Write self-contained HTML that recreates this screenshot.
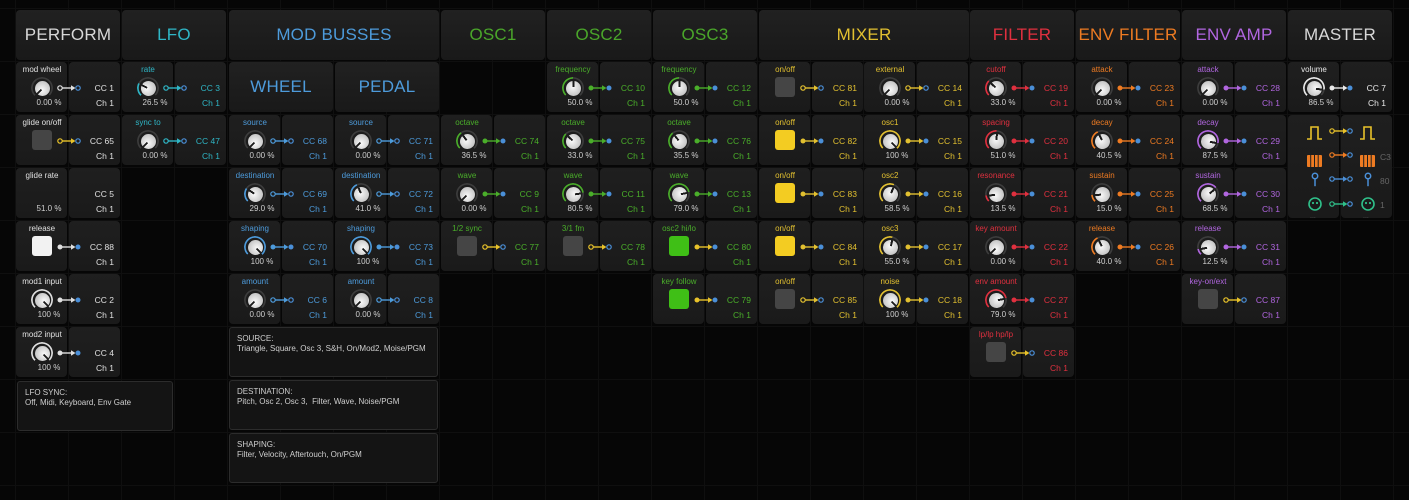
<!DOCTYPE html>
<html><head><meta charset="utf-8"><style>
*{box-sizing:border-box;margin:0;padding:0}
body{width:1409px;height:500px;overflow:hidden;background:#060606;font-family:"Liberation Sans",sans-serif;position:relative;
background-image:linear-gradient(90deg,#0f0f0f 1px,transparent 1px),linear-gradient(#0f0f0f 1px,transparent 1px);background-size:53px 53px;background-position:15px 8px}
.h{position:absolute;top:10px;height:50px;width:104px;border-radius:4px;background:linear-gradient(#212121,#191919);font-size:17px;display:flex;align-items:center;justify-content:center;letter-spacing:0.2px}
.c{position:absolute;width:104px;height:50px;color:var(--c)}
.L,.R{position:absolute;top:0;height:50px;width:51px;border-radius:4px;background:linear-gradient(#1f1f1f,#1a1a1a)}
.L{left:0}.R{left:53px}
.L b{position:absolute;left:-4px;width:60px;top:3px;text-align:center;font-weight:normal;font-size:8px;white-space:nowrap}
.L s{position:absolute;left:8px;width:50px;top:36px;text-align:center;text-decoration:none;font-size:8px;color:#cfcfcf}
.R u,.R em{position:absolute;right:6px;font-size:8.5px;text-decoration:none;font-style:normal}
.R u{top:21px}.R em{top:36px}
.k{position:absolute;left:15px;top:15px;width:22px;height:22px}
.k:before{content:"";position:absolute;inset:0;border-radius:50%;background:conic-gradient(from 225deg,var(--c) calc(var(--p)*270deg),#3c3c3c 0 270deg,transparent 0);-webkit-mask:radial-gradient(circle,transparent 9px,#000 9.5px);mask:radial-gradient(circle,transparent 9px,#000 9.5px)}
.k:after{content:"";position:absolute;left:3.5px;top:3.5px;width:15px;height:15px;border-radius:50%;background:linear-gradient(90deg,transparent 6.5px,#1a1a1a 6.5px 8.5px,transparent 8.5px) top/100% 6px no-repeat,radial-gradient(circle at 45% 40%,#fafafa,#c8c8c8 70%,#999);transform:rotate(calc(-135deg + var(--p)*270deg))}
.t{position:absolute;left:16px;top:15px;width:20px;height:20px;border-radius:3px;background:#454545}
.a{position:absolute;left:41px;top:22px;width:24px;height:8px;z-index:2;overflow:visible}
.x{position:absolute;border:1px solid #2c2c2c;background:#141414;border-radius:3px;color:#cfcfcf;font-size:8px;line-height:10px;padding:6px 7px}
.m{position:absolute;top:115px;height:103px;width:51px;border-radius:4px;background:linear-gradient(#1f1f1f,#1a1a1a)}
</style></head><body>
<svg width="0" height="0" style="position:absolute">
<symbol id="ao" viewBox="0 0 24 8"><circle cx="3" cy="4" r="2.2" fill="none" stroke="currentColor" stroke-width="1.2"/><path d="M5.2 4H15" stroke="currentColor" stroke-width="1.4"/><path d="M14 1.3L18.5 4L14 6.7Z" fill="currentColor"/><circle cx="21" cy="4" r="2.2" fill="none" stroke="#4a8fd8" stroke-width="1.2"/></symbol>
<symbol id="af" viewBox="0 0 24 8"><circle cx="3" cy="4" r="2.5" fill="currentColor"/><path d="M5 4H15" stroke="currentColor" stroke-width="1.4"/><path d="M14 1.3L18.5 4L14 6.7Z" fill="currentColor"/><circle cx="21" cy="4" r="2.5" fill="#4a8fd8"/></symbol>
</svg>

<div class="h" style="left:16px;color:#d8d8d8">PERFORM</div>
<div class="h" style="left:122px;color:#2fb6c6">LFO</div>
<div class="h" style="left:229px;width:210px;color:#4d9bdb">MOD BUSSES</div>
<div class="h" style="left:441px;color:#4aa62a">OSC1</div>
<div class="h" style="left:547px;color:#4aa62a">OSC2</div>
<div class="h" style="left:653px;color:#4aa62a">OSC3</div>
<div class="h" style="left:759px;width:210px;color:#e2c030">MIXER</div>
<div class="h" style="left:970px;color:#e0303f">FILTER</div>
<div class="h" style="left:1076px;color:#ee7b22">ENV FILTER</div>
<div class="h" style="left:1182px;color:#b166e0">ENV AMP</div>
<div class="h" style="left:1288px;color:#d8d8d8">MASTER</div>
<div class="h" style="left:229px;top:62px;width:104px;color:#4d9bdb">WHEEL</div>
<div class="h" style="left:335px;top:62px;width:104px;color:#4d9bdb">PEDAL</div>

<div class="c" style="left:16px;top:62px;--c:#e0e0e0"><div class="L"><b>mod wheel</b><i class="k" style="--p:0"></i><s>0.00 %</s></div><div class="R"><u>CC 1</u><em>Ch 1</em></div><svg class="a"><use href="#ao"/></svg></div>
<div class="c" style="left:16px;top:115px;--c:#e0e0e0"><div class="L"><b>glide on/off</b><i class="t"></i></div><div class="R"><u>CC 65</u><em>Ch 1</em></div><svg class="a" style="color:#e8c22a"><use href="#ao"/></svg></div>
<div class="c" style="left:16px;top:168px;--c:#e0e0e0"><div class="L"><b>glide rate</b><s>51.0 %</s></div><div class="R"><u>CC 5</u><em>Ch 1</em></div></div>
<div class="c" style="left:16px;top:221px;--c:#e0e0e0"><div class="L"><b>release</b><i class="t" style="background:#f2f2f2"></i></div><div class="R"><u>CC 88</u><em>Ch 1</em></div><svg class="a"><use href="#af"/></svg></div>
<div class="c" style="left:16px;top:274px;--c:#e0e0e0"><div class="L"><b>mod1 input</b><i class="k" style="--p:1"></i><s>100 %</s></div><div class="R"><u>CC 2</u><em>Ch 1</em></div><svg class="a"><use href="#af"/></svg></div>
<div class="c" style="left:16px;top:327px;--c:#e0e0e0"><div class="L"><b>mod2 input</b><i class="k" style="--p:1"></i><s>100 %</s></div><div class="R"><u>CC 4</u><em>Ch 1</em></div><svg class="a"><use href="#af"/></svg></div>
<div class="x" style="left:17px;top:381px;width:156px;height:50px">LFO SYNC:<br>Off, Midi, Keyboard, Env Gate</div>

<div class="c" style="left:122px;top:62px;--c:#2fb6c6"><div class="L"><b>rate</b><i class="k" style="--p:0.265"></i><s>26.5 %</s></div><div class="R"><u>CC 3</u><em>Ch 1</em></div><svg class="a"><use href="#ao"/></svg></div>
<div class="c" style="left:122px;top:115px;--c:#2fb6c6"><div class="L"><b>sync to</b><i class="k" style="--p:0"></i><s>0.00 %</s></div><div class="R"><u>CC 47</u><em>Ch 1</em></div><svg class="a"><use href="#ao"/></svg></div>

<div class="c" style="left:229px;top:115px;--c:#4d9bdb"><div class="L"><b>source</b><i class="k" style="--p:0"></i><s>0.00 %</s></div><div class="R"><u>CC 68</u><em>Ch 1</em></div><svg class="a"><use href="#ao"/></svg></div>
<div class="c" style="left:229px;top:168px;--c:#4d9bdb"><div class="L"><b>destination</b><i class="k" style="--p:0.29"></i><s>29.0 %</s></div><div class="R"><u>CC 69</u><em>Ch 1</em></div><svg class="a"><use href="#ao"/></svg></div>
<div class="c" style="left:229px;top:221px;--c:#4d9bdb"><div class="L"><b>shaping</b><i class="k" style="--p:1"></i><s>100 %</s></div><div class="R"><u>CC 70</u><em>Ch 1</em></div><svg class="a"><use href="#af"/></svg></div>
<div class="c" style="left:229px;top:274px;--c:#4d9bdb"><div class="L"><b>amount</b><i class="k" style="--p:0"></i><s>0.00 %</s></div><div class="R"><u>CC 6</u><em>Ch 1</em></div><svg class="a"><use href="#ao"/></svg></div>
<div class="c" style="left:335px;top:115px;--c:#4d9bdb"><div class="L"><b>source</b><i class="k" style="--p:0"></i><s>0.00 %</s></div><div class="R"><u>CC 71</u><em>Ch 1</em></div><svg class="a"><use href="#ao"/></svg></div>
<div class="c" style="left:335px;top:168px;--c:#4d9bdb"><div class="L"><b>destination</b><i class="k" style="--p:0.41"></i><s>41.0 %</s></div><div class="R"><u>CC 72</u><em>Ch 1</em></div><svg class="a"><use href="#ao"/></svg></div>
<div class="c" style="left:335px;top:221px;--c:#4d9bdb"><div class="L"><b>shaping</b><i class="k" style="--p:1"></i><s>100 %</s></div><div class="R"><u>CC 73</u><em>Ch 1</em></div><svg class="a"><use href="#af"/></svg></div>
<div class="c" style="left:335px;top:274px;--c:#4d9bdb"><div class="L"><b>amount</b><i class="k" style="--p:0"></i><s>0.00 %</s></div><div class="R"><u>CC 8</u><em>Ch 1</em></div><svg class="a"><use href="#ao"/></svg></div>
<div class="x" style="left:229px;top:327px;width:209px;height:50px">SOURCE:<br>Triangle, Square, Osc 3, S&amp;H, On/Mod2, Moise/PGM</div>
<div class="x" style="left:229px;top:380px;width:209px;height:50px">DESTINATION:<br>Pitch, Osc 2, Osc 3,&nbsp; Filter, Wave, Noise/PGM</div>
<div class="x" style="left:229px;top:433px;width:209px;height:50px">SHAPING:<br>Filter, Velocity, Aftertouch, On/PGM</div>

<div class="c" style="left:441px;top:115px;--c:#4aae2a"><div class="L"><b>octave</b><i class="k" style="--p:0.365"></i><s>36.5 %</s></div><div class="R"><u>CC 74</u><em>Ch 1</em></div><svg class="a"><use href="#af"/></svg></div>
<div class="c" style="left:441px;top:168px;--c:#4aae2a"><div class="L"><b>wave</b><i class="k" style="--p:0"></i><s>0.00 %</s></div><div class="R"><u>CC 9</u><em>Ch 1</em></div><svg class="a"><use href="#af"/></svg></div>
<div class="c" style="left:441px;top:221px;--c:#4aae2a"><div class="L"><b>1/2 sync</b><i class="t"></i></div><div class="R"><u>CC 77</u><em>Ch 1</em></div><svg class="a" style="color:#e8c22a"><use href="#ao"/></svg></div>
<div class="c" style="left:547px;top:62px;--c:#4aae2a"><div class="L"><b>frequency</b><i class="k" style="--p:0.5"></i><s>50.0 %</s></div><div class="R"><u>CC 10</u><em>Ch 1</em></div><svg class="a"><use href="#af"/></svg></div>
<div class="c" style="left:547px;top:115px;--c:#4aae2a"><div class="L"><b>octave</b><i class="k" style="--p:0.33"></i><s>33.0 %</s></div><div class="R"><u>CC 75</u><em>Ch 1</em></div><svg class="a"><use href="#af"/></svg></div>
<div class="c" style="left:547px;top:168px;--c:#4aae2a"><div class="L"><b>wave</b><i class="k" style="--p:0.805"></i><s>80.5 %</s></div><div class="R"><u>CC 11</u><em>Ch 1</em></div><svg class="a"><use href="#af"/></svg></div>
<div class="c" style="left:547px;top:221px;--c:#4aae2a"><div class="L"><b>3/1 fm</b><i class="t"></i></div><div class="R"><u>CC 78</u><em>Ch 1</em></div><svg class="a" style="color:#e8c22a"><use href="#ao"/></svg></div>
<div class="c" style="left:653px;top:62px;--c:#4aae2a"><div class="L"><b>frequency</b><i class="k" style="--p:0.5"></i><s>50.0 %</s></div><div class="R"><u>CC 12</u><em>Ch 1</em></div><svg class="a"><use href="#af"/></svg></div>
<div class="c" style="left:653px;top:115px;--c:#4aae2a"><div class="L"><b>octave</b><i class="k" style="--p:0.355"></i><s>35.5 %</s></div><div class="R"><u>CC 76</u><em>Ch 1</em></div><svg class="a"><use href="#af"/></svg></div>
<div class="c" style="left:653px;top:168px;--c:#4aae2a"><div class="L"><b>wave</b><i class="k" style="--p:0.79"></i><s>79.0 %</s></div><div class="R"><u>CC 13</u><em>Ch 1</em></div><svg class="a"><use href="#af"/></svg></div>
<div class="c" style="left:653px;top:221px;--c:#4aae2a"><div class="L"><b>osc2 hi/lo</b><i class="t" style="background:#3fbf16"></i></div><div class="R"><u>CC 80</u><em>Ch 1</em></div><svg class="a" style="color:#e8c22a"><use href="#af"/></svg></div>
<div class="c" style="left:653px;top:274px;--c:#4aae2a"><div class="L"><b>key follow</b><i class="t" style="background:#3fbf16"></i></div><div class="R"><u>CC 79</u><em>Ch 1</em></div><svg class="a" style="color:#e8c22a"><use href="#af"/></svg></div>

<div class="c" style="left:759px;top:62px;--c:#e2c030"><div class="L"><b>on/off</b><i class="t"></i></div><div class="R"><u>CC 81</u><em>Ch 1</em></div><svg class="a"><use href="#ao"/></svg></div>
<div class="c" style="left:759px;top:115px;--c:#e2c030"><div class="L"><b>on/off</b><i class="t" style="background:#f3cc22"></i></div><div class="R"><u>CC 82</u><em>Ch 1</em></div><svg class="a"><use href="#af"/></svg></div>
<div class="c" style="left:759px;top:168px;--c:#e2c030"><div class="L"><b>on/off</b><i class="t" style="background:#f3cc22"></i></div><div class="R"><u>CC 83</u><em>Ch 1</em></div><svg class="a"><use href="#af"/></svg></div>
<div class="c" style="left:759px;top:221px;--c:#e2c030"><div class="L"><b>on/off</b><i class="t" style="background:#f3cc22"></i></div><div class="R"><u>CC 84</u><em>Ch 1</em></div><svg class="a"><use href="#af"/></svg></div>
<div class="c" style="left:759px;top:274px;--c:#e2c030"><div class="L"><b>on/off</b><i class="t"></i></div><div class="R"><u>CC 85</u><em>Ch 1</em></div><svg class="a"><use href="#ao"/></svg></div>
<div class="c" style="left:864px;top:62px;--c:#e2c030"><div class="L"><b>external</b><i class="k" style="--p:0"></i><s>0.00 %</s></div><div class="R"><u>CC 14</u><em>Ch 1</em></div><svg class="a"><use href="#ao"/></svg></div>
<div class="c" style="left:864px;top:115px;--c:#e2c030"><div class="L"><b>osc1</b><i class="k" style="--p:1"></i><s>100 %</s></div><div class="R"><u>CC 15</u><em>Ch 1</em></div><svg class="a"><use href="#af"/></svg></div>
<div class="c" style="left:864px;top:168px;--c:#e2c030"><div class="L"><b>osc2</b><i class="k" style="--p:0.585"></i><s>58.5 %</s></div><div class="R"><u>CC 16</u><em>Ch 1</em></div><svg class="a"><use href="#af"/></svg></div>
<div class="c" style="left:864px;top:221px;--c:#e2c030"><div class="L"><b>osc3</b><i class="k" style="--p:0.55"></i><s>55.0 %</s></div><div class="R"><u>CC 17</u><em>Ch 1</em></div><svg class="a"><use href="#af"/></svg></div>
<div class="c" style="left:864px;top:274px;--c:#e2c030"><div class="L"><b>noise</b><i class="k" style="--p:1"></i><s>100 %</s></div><div class="R"><u>CC 18</u><em>Ch 1</em></div><svg class="a"><use href="#af"/></svg></div>

<div class="c" style="left:970px;top:62px;--c:#e0303f"><div class="L"><b>cutoff</b><i class="k" style="--p:0.33"></i><s>33.0 %</s></div><div class="R"><u>CC 19</u><em>Ch 1</em></div><svg class="a"><use href="#af"/></svg></div>
<div class="c" style="left:970px;top:115px;--c:#e0303f"><div class="L"><b>spacing</b><i class="k" style="--p:0.51"></i><s>51.0 %</s></div><div class="R"><u>CC 20</u><em>Ch 1</em></div><svg class="a"><use href="#af"/></svg></div>
<div class="c" style="left:970px;top:168px;--c:#e0303f"><div class="L"><b>resonance</b><i class="k" style="--p:0.135"></i><s>13.5 %</s></div><div class="R"><u>CC 21</u><em>Ch 1</em></div><svg class="a"><use href="#af"/></svg></div>
<div class="c" style="left:970px;top:221px;--c:#e0303f"><div class="L"><b>key amount</b><i class="k" style="--p:0"></i><s>0.00 %</s></div><div class="R"><u>CC 22</u><em>Ch 1</em></div><svg class="a"><use href="#af"/></svg></div>
<div class="c" style="left:970px;top:274px;--c:#e0303f"><div class="L"><b>env amount</b><i class="k" style="--p:0.79"></i><s>79.0 %</s></div><div class="R"><u>CC 27</u><em>Ch 1</em></div><svg class="a"><use href="#af"/></svg></div>
<div class="c" style="left:970px;top:327px;--c:#e0303f"><div class="L"><b>lp/lp hp/lp</b><i class="t"></i></div><div class="R"><u>CC 86</u><em>Ch 1</em></div><svg class="a" style="color:#e8c22a"><use href="#ao"/></svg></div>

<div class="c" style="left:1076px;top:62px;--c:#ee7b22"><div class="L"><b>attack</b><i class="k" style="--p:0"></i><s>0.00 %</s></div><div class="R"><u>CC 23</u><em>Ch 1</em></div><svg class="a"><use href="#af"/></svg></div>
<div class="c" style="left:1076px;top:115px;--c:#ee7b22"><div class="L"><b>decay</b><i class="k" style="--p:0.405"></i><s>40.5 %</s></div><div class="R"><u>CC 24</u><em>Ch 1</em></div><svg class="a"><use href="#af"/></svg></div>
<div class="c" style="left:1076px;top:168px;--c:#ee7b22"><div class="L"><b>sustain</b><i class="k" style="--p:0.15"></i><s>15.0 %</s></div><div class="R"><u>CC 25</u><em>Ch 1</em></div><svg class="a"><use href="#af"/></svg></div>
<div class="c" style="left:1076px;top:221px;--c:#ee7b22"><div class="L"><b>release</b><i class="k" style="--p:0.4"></i><s>40.0 %</s></div><div class="R"><u>CC 26</u><em>Ch 1</em></div><svg class="a"><use href="#af"/></svg></div>

<div class="c" style="left:1182px;top:62px;--c:#b166e0"><div class="L"><b>attack</b><i class="k" style="--p:0"></i><s>0.00 %</s></div><div class="R"><u>CC 28</u><em>Ch 1</em></div><svg class="a"><use href="#af"/></svg></div>
<div class="c" style="left:1182px;top:115px;--c:#b166e0"><div class="L"><b>decay</b><i class="k" style="--p:0.875"></i><s>87.5 %</s></div><div class="R"><u>CC 29</u><em>Ch 1</em></div><svg class="a"><use href="#af"/></svg></div>
<div class="c" style="left:1182px;top:168px;--c:#b166e0"><div class="L"><b>sustain</b><i class="k" style="--p:0.685"></i><s>68.5 %</s></div><div class="R"><u>CC 30</u><em>Ch 1</em></div><svg class="a"><use href="#af"/></svg></div>
<div class="c" style="left:1182px;top:221px;--c:#b166e0"><div class="L"><b>release</b><i class="k" style="--p:0.125"></i><s>12.5 %</s></div><div class="R"><u>CC 31</u><em>Ch 1</em></div><svg class="a"><use href="#af"/></svg></div>
<div class="c" style="left:1182px;top:274px;--c:#b166e0"><div class="L"><b>key-on/ext</b><i class="t"></i></div><div class="R"><u>CC 87</u><em>Ch 1</em></div><svg class="a" style="color:#e8c22a"><use href="#ao"/></svg></div>

<div class="c" style="left:1288px;top:62px;--c:#e8e8e8"><div class="L"><b>volume</b><i class="k" style="--p:0.865"></i><s>86.5 %</s></div><div class="R"><u>CC 7</u><em>Ch 1</em></div><svg class="a"><use href="#af"/></svg></div>
<div class="m" style="left:1288px"></div><div class="m" style="left:1341px"></div>
<svg style="position:absolute;left:1288px;top:115px" width="104" height="103" viewBox="0 0 104 103">
 <g fill="none" stroke="#e8c22a" stroke-width="1.6"><path d="M19 24h4v-12h7v12h4"/><path d="M72 24h4v-12h7v12h4"/></g>
 <g fill="#ee7b22"><rect x="19" y="40" width="15" height="12" rx="1"/><rect x="72" y="40" width="15" height="12" rx="1"/></g>
 <g stroke="#1e1e1e" stroke-width="1"><path d="M22.7 40v12M26.5 40v12M30.2 40v12M75.7 40v12M79.5 40v12M83.2 40v12"/></g>
 <g fill="none" stroke="#4a8fd8" stroke-width="1.5"><circle cx="27" cy="61" r="2.7"/><path d="M27 63.7v7.5"/><circle cx="80" cy="61" r="2.7"/><path d="M80 63.7v7.5"/></g>
 <g fill="none" stroke="#2fc08a" stroke-width="1.6"><circle cx="27" cy="89" r="6"/><circle cx="80" cy="89" r="6"/></g>
 <g fill="#2fc08a"><circle cx="25" cy="88" r="1.1"/><circle cx="29" cy="88" r="1.1"/><circle cx="78" cy="88" r="1.1"/><circle cx="82" cy="88" r="1.1"/></g>
 <g font-family="Liberation Sans" font-size="8.5" fill="#666"><text x="92" y="45">C3</text><text x="92" y="69">80</text><text x="92" y="93">1</text></g>
 <g fill="#555"><text x="22" y="103" font-size="7" font-family="Liberation Sans">...</text><text x="75" y="103" font-size="7" font-family="Liberation Sans">...</text></g>
</svg>
<svg class="a" style="left:1329px;top:127px;color:#e8c22a"><use href="#ao"/></svg>
<svg class="a" style="left:1329px;top:151px;color:#ee7b22"><use href="#ao"/></svg>
<svg class="a" style="left:1329px;top:175px;color:#4a8fd8"><use href="#ao"/></svg>
<svg class="a" style="left:1329px;top:200px;color:#2fc08a"><use href="#ao"/></svg>
</body></html>
